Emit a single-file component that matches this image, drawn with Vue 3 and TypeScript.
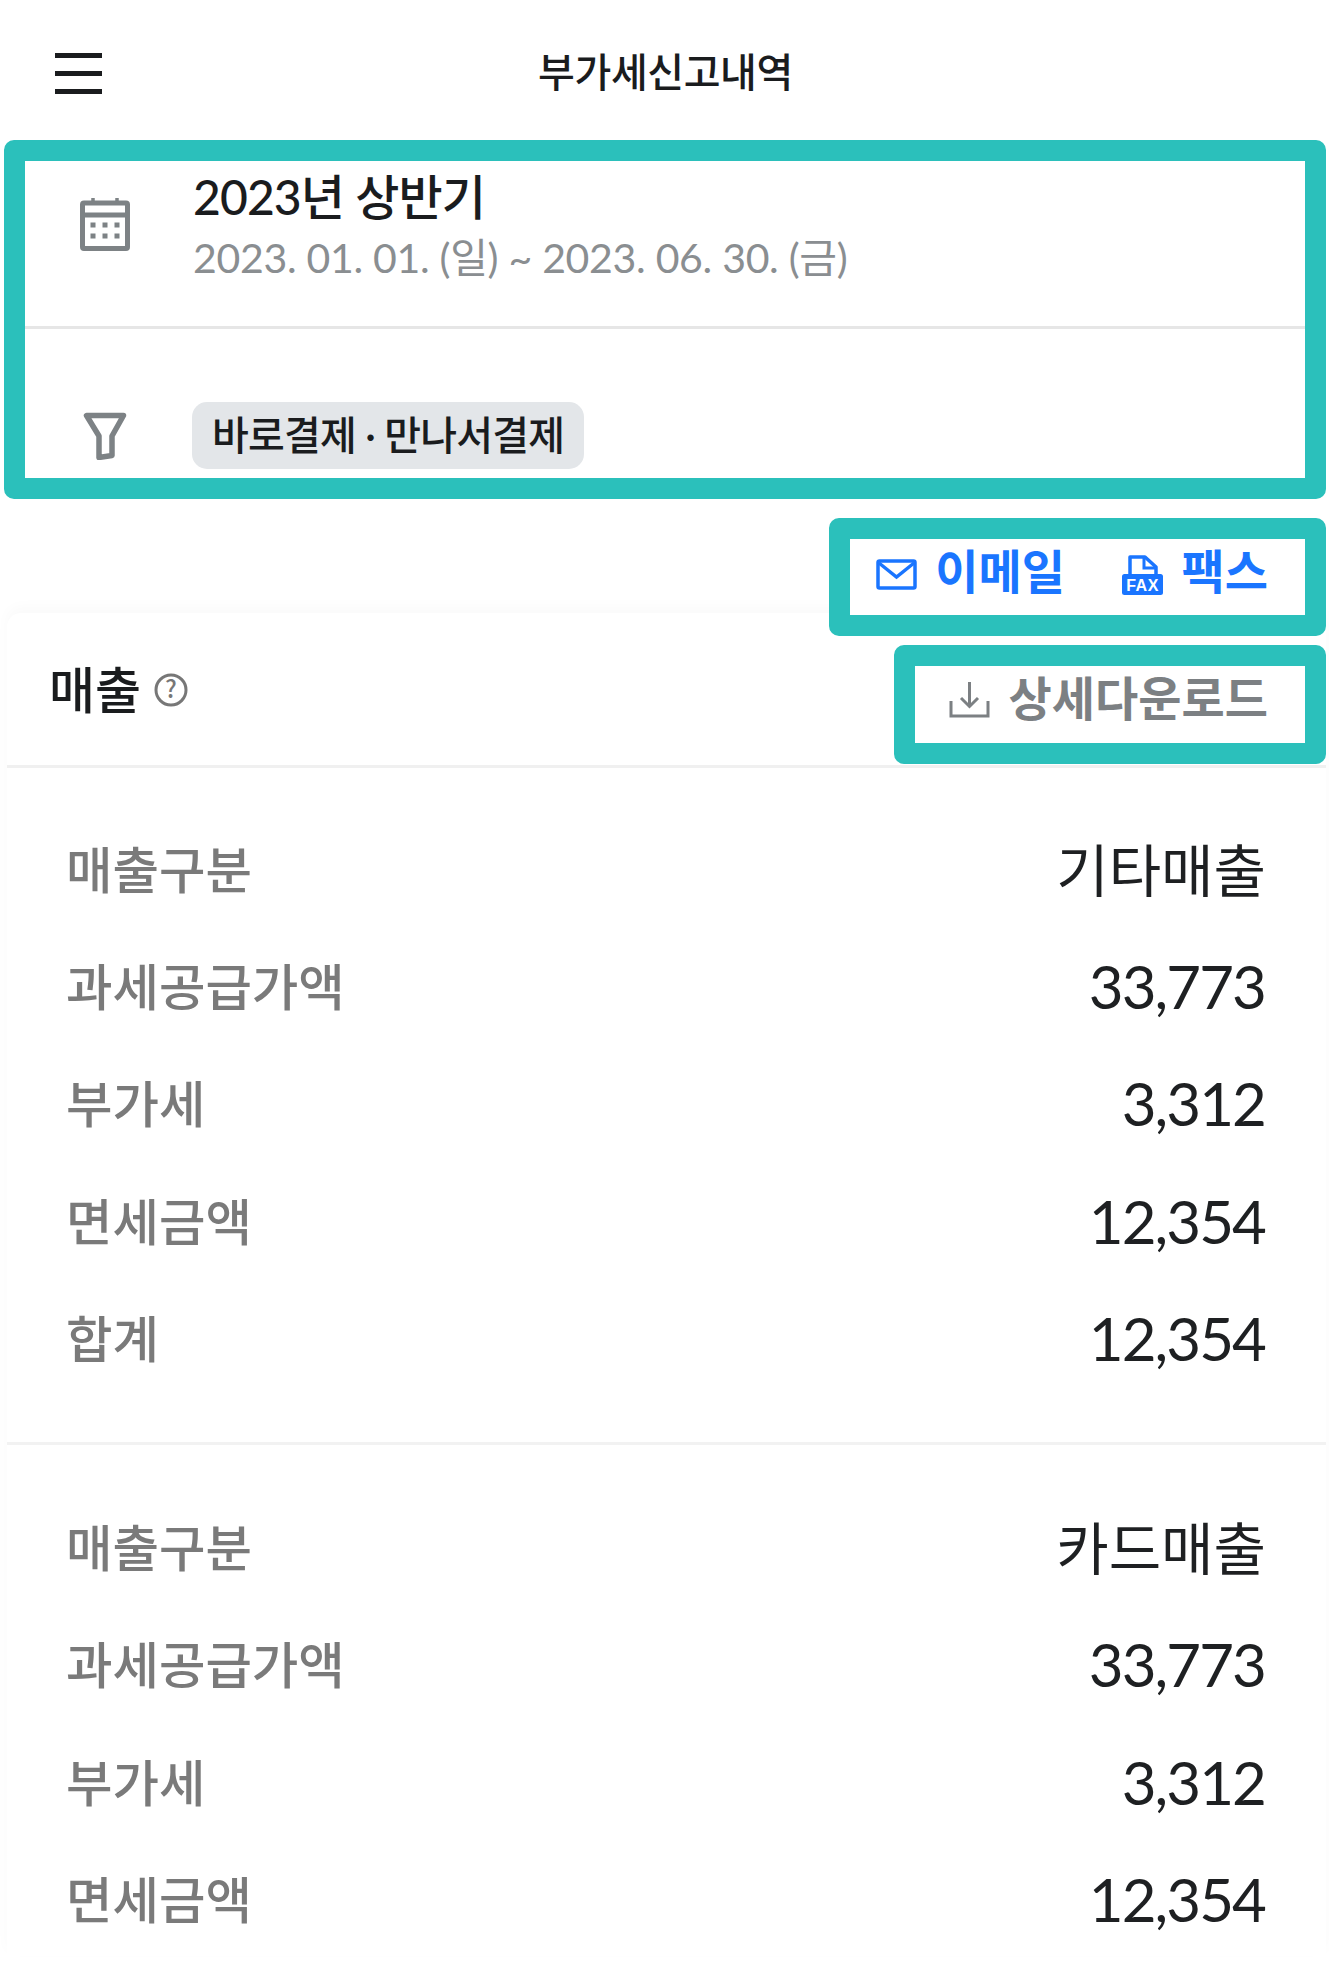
<script setup lang="ts">
interface Row { label: string; value: string }
const sectionA: Row[] = [
  { label: '매출구분', value: '기타매출' },
  { label: '과세공급가액', value: '33,773' },
  { label: '부가세', value: '3,312' },
  { label: '면세금액', value: '12,354' },
  { label: '합계', value: '12,354' },
]
const sectionB: Row[] = [
  { label: '매출구분', value: '카드매출' },
  { label: '과세공급가액', value: '33,773' },
  { label: '부가세', value: '3,312' },
  { label: '면세금액', value: '12,354' },
]
const isNumber = (value: string): boolean => /\d/.test(value)
</script>

<template>
  <div class="page">
    <header class="top">
      <div class="burger"><span></span><span></span><span></span></div>
      <h1 class="top-title">부가세신고내역</h1>
    </header>

    <section class="mark period">
      <div class="period-row">
        <svg class="cal" width="50" height="53" viewBox="0 0 50 53" fill="none">
          <path d="M13 0v5M37 0v5" stroke="#7d8285" stroke-width="3.500" />
          <rect x="2.500" y="5" width="45" height="45.500" rx="1.500" stroke="#7d8285" stroke-width="5" />
          <path d="M2 17h46" stroke="#7d8285" stroke-width="5" />
          <path d="M10.500 24.500h5v5h-5zM22.500 24.500h5v5h-5zM34.500 24.500h5v5h-5zM10.500 35.500h5v5h-5zM22.500 35.500h5v5h-5zM34.500 35.500h5v5h-5z" fill="#7d8285" />
        </svg>
        <div class="period-text">
          <div class="period-title">2023년 상반기</div>
          <div class="period-sub">2023. 01. 01. (일) ~ 2023. 06. 30. (금)</div>
        </div>
      </div>
      <div class="filter-row">
        <svg class="funnel" width="44" height="48" viewBox="0 0 44 48" fill="none">
          <path d="M3.500 3.500h37L29 24v19.500l-13 2V24z" stroke="#7d8285" stroke-width="5.500" stroke-linejoin="round" />
        </svg>
        <span class="chip">바로결제 · 만나서결제</span>
      </div>
    </section>

    <div class="mark share">
      <button class="share-btn" type="button">
        <svg class="share-icon" width="41" height="31" viewBox="0 0 41 31" fill="none">
          <rect x="2" y="2" width="37" height="27" rx="1.500" stroke="#1a75ff" stroke-width="3.500" />
          <path d="M3 4l17.500 14L38 4" stroke="#1a75ff" stroke-width="3.500" />
        </svg>
        <span class="share-label">이메일</span>
      </button>
      <button class="share-btn fax" type="button">
        <svg class="share-icon" width="42" height="41" viewBox="0 0 42 41" fill="none">
          <path d="M8 20V3h15l11 10v7" stroke="#1a75ff" stroke-width="3.500" stroke-linejoin="round" />
          <path d="M22 3v11h12" stroke="#1a75ff" stroke-width="3" />
          <rect x="0" y="20" width="41" height="21" rx="2.500" fill="#1a75ff" />
          <text x="20.500" y="37" text-anchor="middle" class="fax-text">FAX</text>
        </svg>
        <span class="share-label">팩스</span>
      </button>
    </div>

    <main class="card">
      <div class="card-head">
        <div class="card-title">
          <h2>매출</h2>
          <svg width="34" height="34" viewBox="0 0 34 34" fill="none">
            <circle cx="17" cy="17" r="15" stroke="#777" stroke-width="3" />
            <text x="17" y="25" text-anchor="middle" class="help-text">?</text>
          </svg>
        </div>
        <div class="mark download">
          <svg class="dl-icon" width="41" height="36" viewBox="0 0 41 36" fill="none">
            <path d="M20.500 0v24M12 16l8.500 8.500L29 16" stroke="#7c8083" stroke-width="3" />
            <path d="M2 19v15h37V19" stroke="#7c8083" stroke-width="3" />
          </svg>
          <span class="dl-label">상세다운로드</span>
        </div>
      </div>

      <div class="rows rows-a">
        <div v-for="row in sectionA" :key="row.label" class="row">
          <span class="label">{{ row.label }}</span>
          <span class="value" :class="{ num: isNumber(row.value) }">{{ row.value }}</span>
        </div>
      </div>
      <div class="rows rows-b">
        <div v-for="row in sectionB" :key="row.label" class="row">
          <span class="label">{{ row.label }}</span>
          <span class="value" :class="{ num: isNumber(row.value) }">{{ row.value }}</span>
        </div>
      </div>
    </main>
  </div>
</template>

<style scoped>
.page {
  width: 1329px;
  height: 1980px;
  overflow: hidden;
  background: #fff;
  font-family: "Lato", "Noto Sans CJK KR", sans-serif;
  color: #1a1c1e;
}
.top {
  position: relative;
  height: 140px;
  display: flex;
  align-items: center;
  justify-content: center;
}
.burger {
  position: absolute;
  left: 55px;
  top: 53px;
  display: flex;
  flex-direction: column;
  gap: 13px;
}
.burger span {
  display: block;
  width: 47px;
  height: 5px;
  background: #1a1c1e;
}
.top-title {
  margin: 0 0 0 2px;
  position: relative;
  top: 2px;
  font-size: 40px;
  font-weight: 500;
  letter-spacing: -0.4px;
  line-height: 1;
}
.mark {
  border: 21px solid #2bc0bb;
  border-radius: 10px;
  background: #fff;
  box-sizing: border-box;
}
.period {
  margin: 0 3px 0 4px;
  height: 359px;
  display: flex;
  flex-direction: column;
}
.period-row {
  height: 168px;
  box-sizing: border-box;
  border-bottom: 3px solid #e6e6e6;
  display: flex;
  align-items: flex-start;
}
.cal {
  margin: 37px 0 0 55px;
  flex: none;
}
.period-text {
  margin-left: 63px;
  padding-top: 8px;
}
.period-title {
  font-size: 48px;
  font-weight: 500;
  line-height: 56px;
  letter-spacing: -0.9px;
}
.period-sub {
  font-size: 41px;
  line-height: 50px;
  margin-top: 8px;
  color: #8a8e91;
  letter-spacing: -0.3px;
  white-space: nowrap;
}
.filter-row {
  flex: 1;
  display: flex;
  align-items: flex-start;
}
.funnel {
  margin: 83px 0 0 58px;
  flex: none;
}
.chip {
  margin: 73px 0 0 65px;
  height: 67px;
  box-sizing: border-box;
  padding: 0 20px 6px;
  border-radius: 15px;
  background: #e3e6e9;
  display: flex;
  align-items: center;
  font-size: 40px;
  font-weight: 500;
  letter-spacing: -0.8px;
  white-space: nowrap;
}
.share {
  position: relative;
  z-index: 2;
  width: 497px;
  height: 118px;
  margin: 19px 3px -23px auto;
  display: flex;
  align-items: center;
  justify-content: flex-end;
  gap: 57px;
  padding-right: 37px;
}
.share-btn {
  appearance: none;
  border: 0;
  padding: 0;
  background: none;
  display: flex;
  align-items: center;
  gap: 18.500px;
  color: #1a75ff;
  font-family: inherit;
  font-size: 47px;
  font-weight: 700;
  line-height: 1;
}
.share-btn.fax {
  gap: 17.500px;
}
.share-icon {
  position: relative;
  top: -3px;
}
.share-label {
  position: relative;
  top: -6px;
}
.fax-text {
  font-family: "Liberation Sans", sans-serif;
  font-size: 16px;
  font-weight: 700;
  fill: #fff;
  letter-spacing: 0.5px;
}
.card {
  margin: 0 3px 0 7px;
  border-radius: 14px 14px 0 0;
  background: #fff;
  box-shadow: 0 -6px 14px rgba(0, 0, 0, 0.025);
}
.card-head {
  height: 155px;
  box-sizing: border-box;
  border-bottom: 3px solid #f0f0f0;
  display: flex;
  justify-content: space-between;
  align-items: flex-start;
}
.card-title {
  display: flex;
  align-items: center;
  gap: 13px;
  margin: 47px 0 0 42px;
}
.card-title h2 {
  margin: 0;
  flex: none;
  font-size: 50px;
  font-weight: 500;
  line-height: 60px;
  white-space: nowrap;
}
.help-text {
  font-family: "Noto Sans CJK KR", sans-serif;
  font-size: 24px;
  font-weight: 500;
  fill: #777;
}
.download {
  width: 432px;
  height: 119px;
  margin: 32px 0 0;
  display: flex;
  align-items: center;
  justify-content: flex-end;
  gap: 19px;
  padding-right: 37px;
  font-size: 47px;
  font-weight: 700;
  color: #7c8083;
}
.dl-icon {
  position: relative;
  top: -5px;
}
.dl-label {
  position: relative;
  top: -9px;
}
.rows-a {
  padding: 40px 0 48px;
  border-bottom: 3px solid #f2f2f2;
}
.rows-b {
  padding-top: 41px;
}
.row {
  height: 117.300px;
  display: flex;
  align-items: center;
  justify-content: space-between;
  padding: 0 60px 0 59px;
}
.label {
  font-size: 50.500px;
  font-weight: 500;
  color: #7a7a7a;
}
.value {
  font-size: 57px;
  font-weight: 400;
  color: #1e2022;
}
.value.num {
  position: relative;
  top: 2px;
  margin-right: 1px;
  font-size: 60px;
  letter-spacing: -1.900px;
}
</style>
